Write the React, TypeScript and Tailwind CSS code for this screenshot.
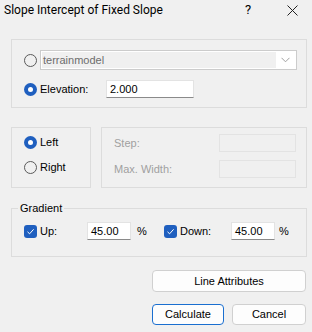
import React from "react";

const Radio = ({ checked }: { checked?: boolean }) =>
  checked ? (
    <div className="w-[13px] h-[13px] rounded-full bg-[#1f5fbf] flex items-center justify-center shrink-0">
      <div className="w-[5px] h-[5px] rounded-full bg-white" />
    </div>
  ) : (
    <div className="w-[13px] h-[13px] rounded-full border border-[#5a5a5a] bg-transparent shrink-0" />
  );

const Check = () => (
  <div className="w-[13px] h-[13px] rounded-[3px] bg-[#1f5fbf] flex items-center justify-center shrink-0">
    <svg width="9" height="9" viewBox="0 0 9 9">
      <path d="M1.5 4.8 L3.6 6.8 L7.6 2.3" fill="none" stroke="white" strokeWidth="1" />
    </svg>
  </div>
);

const Input = ({ value, w }: { value: string; w: string }) => (
  <div
    className={`${w} h-[18px] bg-white border border-[#e3e3e3] border-b-[#8a8a8a] flex items-center pl-[3px] text-[11px] text-black`}
  >
    {value}
  </div>
);

export default function App() {
  return (
    <div
      className="w-[312px] h-[332px] bg-[#f0f0f0] text-black flex flex-col overflow-hidden"
      style={{ fontFamily: '"Liberation Sans", Arial, sans-serif' }}
    >
      {/* Title bar */}
      <div className="h-[20px] flex items-center relative">
        <div
          className="pl-[4px] text-[12px] text-black leading-none"
          style={{ fontFamily: 'Roboto, "Noto Sans", sans-serif' }}
        >
          Slope Intercept of Fixed Slope
        </div>
        <div
          className="absolute left-[245px] top-[3px] text-[13px] leading-none"
          style={{ fontFamily: 'Roboto, sans-serif' }}
        >
          ?
        </div>
        <svg className="absolute left-[287px] top-[5px]" width="11" height="11" viewBox="0 0 11 11">
          <path d="M0.5 0.5 L10.5 10.5 M10.5 0.5 L0.5 10.5" stroke="#222" strokeWidth="1" />
        </svg>
      </div>

      {/* Group 1 */}
      <div className="mt-[19px] ml-[11px] w-[296px] h-[69px] border border-[#dcdcdc] pt-[10px] pl-[12px] pr-[9px] flex flex-col gap-[10px]">
        <div className="flex items-center h-[20px]">
          <Radio />
          <div className="ml-[3px] flex-1 h-[20px] border border-[#cccccc] bg-white p-[1px] flex items-center">
            <div className="flex-1 h-full bg-[#f0f0f0] flex items-center pl-[1px] text-[11px] text-[#6d6d6d]">
              terrainmodel
            </div>
            <div className="w-[19px] flex items-center justify-center">
              <svg width="9" height="6" viewBox="0 0 9 6">
                <path d="M0.5 0.8 L4.5 4.8 L8.5 0.8" fill="none" stroke="#a0a0a0" strokeWidth="1" />
              </svg>
            </div>
          </div>
        </div>
        <div className="flex items-center h-[18px]">
          <Radio checked />
          <span className="ml-[3px] w-[66px] text-[11px]">Elevation:</span>
          <Input value="2.000" w="w-[88px]" />
        </div>
      </div>

      {/* Group 2 row */}
      <div className="mt-[19px] ml-[11px] flex gap-[10px]">
        <div className="w-[80px] h-[61px] border border-[#dcdcdc] pl-[12px] pt-[8px] flex flex-col gap-[12px]">
          <div className="flex items-center h-[13px]">
            <Radio checked />
            <span className="ml-[3px] text-[11px]">Left</span>
          </div>
          <div className="flex items-center h-[13px]">
            <Radio />
            <span className="ml-[3px] text-[11px]">Right</span>
          </div>
        </div>
        <div className="w-[206px] h-[61px] border border-[#dcdcdc] pl-[12px] pt-[6px] flex flex-col gap-[8px]">
          <div className="flex items-center h-[18px]">
            <span className="w-[105px] text-[11px] text-[#a0a0a0]">Step:</span>
            <div className="w-[77px] h-[18px] border border-[#e3e3e3]" />
          </div>
          <div className="flex items-center h-[18px]">
            <span className="w-[105px] text-[11px] text-[#a0a0a0]">Max. Width:</span>
            <div className="w-[77px] h-[18px] border border-[#e3e3e3]" />
          </div>
        </div>
      </div>

      {/* Gradient group */}
      <div className="mt-[20px] ml-[11px] w-[296px] h-[49px] border border-[#dcdcdc] relative pt-[13px] pl-[12px] flex items-start">
        <span className="absolute left-[6px] top-[-8px] px-[2px] bg-[#f0f0f0] text-[11px] leading-[14px]">
          Gradient
        </span>
        <div className="flex items-center h-[18px]">
          <Check />
          <span className="ml-[3px] w-[47px] text-[11px]">Up:</span>
          <Input value="45.00" w="w-[44px]" />
          <span className="ml-[6px] w-[27px] text-[11px]">%</span>
          <Check />
          <span className="ml-[3px] w-[51px] text-[11px]">Down:</span>
          <Input value="45.00" w="w-[44px]" />
          <span className="ml-[4px] text-[11px]">%</span>
        </div>
      </div>

      {/* Buttons */}
      <div className="mt-[13px] ml-[152px] w-[154px] h-[22px] rounded-[4px] border border-[#d0d0d0] bg-[#fdfdfd] flex items-center justify-center text-[11px]">
        Line Attributes
      </div>
      <div className="mt-[12px] ml-[152px] flex gap-[8px]">
        <div className="w-[72px] h-[21px] rounded-[4px] border border-[#1a6fd0] bg-[#fdfdfd] flex items-center justify-center text-[11px]">
          Calculate
        </div>
        <div className="w-[74px] h-[21px] rounded-[4px] border border-[#d0d0d0] bg-[#fdfdfd] flex items-center justify-center text-[11px]">
          Cancel
        </div>
      </div>
    </div>
  );
}
